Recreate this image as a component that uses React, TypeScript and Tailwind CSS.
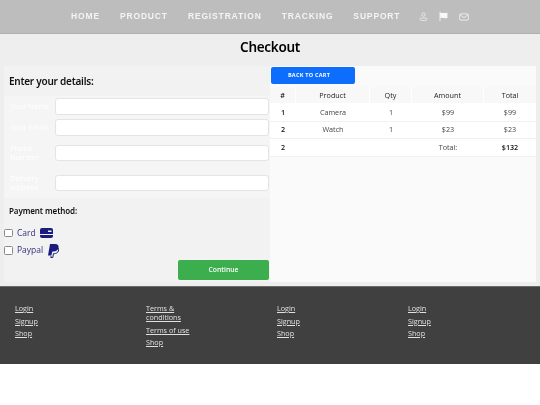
import React from "react";

const sans = "font-['Open_Sans',sans-serif]";

function FieldRow({ label, tall }: { label: string; tall?: boolean }) {
  return (
    <div className={`flex items-center gap-[3px] bg-[#f5f5f5] pl-[2px] pr-[1px] ${tall ? "h-[30px]" : "h-[21px]"}`}>
      <label className="w-[45.5px] pl-[4px] text-[7.5px] leading-[9px] text-white">{label}</label>
      <input className="h-[16.5px] flex-1 rounded-[3px] border border-[#e4e4e4] bg-white min-w-0" />
    </div>
  );
}

function Cell({ children, bold, className = "" }: { children?: React.ReactNode; bold?: boolean; className?: string }) {
  return (
    <div className={`flex items-center justify-center ${bold ? "font-semibold text-[#111]" : "text-[#444]"} ${className}`}>
      {children}
    </div>
  );
}

const cols = "grid grid-cols-[26px_74px_42px_72px_52px] text-[7.2px]";

function FooterCol({ links }: { links: string[] }) {
  return (
    <div className="flex flex-col gap-[3.5px]">
      {links.map((l) => (
        <a key={l} href="#" className="w-[50px] text-[7.2px] leading-[9px] text-[#e0e0e0] underline whitespace-pre-line">
          {l}
        </a>
      ))}
    </div>
  );
}

export default function App() {
  return (
    <div className={`${sans} w-[540px] [will-change:transform]`}>
      <header className="flex h-[34px] items-center border-b border-[#b0b0b0] bg-[#bdbdbd] pl-[71px] font-['Liberation_Sans',sans-serif] text-[8.5px] font-bold tracking-[0.85px] text-[#f4f4f4]">
        <nav className="flex gap-[20px]">
          <span>HOME</span>
          <span>PRODUCT</span>
          <span>REGISTRATION</span>
          <span>TRACKING</span>
          <span>SUPPORT</span>
        </nav>
        <div className="ml-[19px] flex items-center gap-[11px]">
          <svg width="9" height="9" viewBox="0 0 16 16" fill="none" stroke="#f4f4f4" strokeWidth="1.3">
            <circle cx="8" cy="4.5" r="3" />
            <rect x="2" y="10.5" width="12" height="4.5" rx="2" />
          </svg>
          <svg width="9" height="9" viewBox="0 0 16 16" fill="#f8f8f8">
            <path d="M1 0h1.500v16H1z" />
            <path d="M2 1.500c4-1 7 1.500 13 0v9c-6 1.500-9-1-13 0z" />
          </svg>
          <svg width="10" height="10" viewBox="0 0 16 16" fill="none" stroke="#f4f4f4" strokeWidth="1.3">
            <rect x="1" y="3" width="14" height="10" rx="2" />
            <path d="M1.500 4.500 8 9l6.500-4.500" />
          </svg>
        </div>
      </header>

      <main className="h-[252px] bg-[#eeeeee]">
        <h1 className="pt-[4px] text-center font-['Noto_Sans',sans-serif] text-[13.5px] font-semibold leading-[19px] tracking-[-0.3px] text-black">Checkout</h1>
        <div className="mt-[9px] flex pl-[4px] pr-[4px]">
          <section className="flex h-[216px] w-[266px] flex-col bg-[#f2f2f2]">
            <h2 className="pl-[5px] pt-[8px] font-['Noto_Sans',sans-serif] text-[10px] font-semibold leading-[15px] tracking-[-0.25px] text-[#111]">Enter your details:</h2>
            <div className="mt-[7px] flex flex-col">
              <FieldRow label="Your Name" />
              <FieldRow label="Your Email" />
              <FieldRow label="Phone Number" tall />
              <FieldRow label="Delivery address" tall />
            </div>
            <p className="mt-[7px] pl-[5px] font-['Noto_Sans',sans-serif] text-[8px] font-semibold leading-[12px] tracking-[-0.1px] text-[#111]">Payment method:</p>
            <div className="mt-[8px] flex h-[16px] items-center text-[8.5px] text-[#33307f]">
              <span className="h-[8.5px] w-[8.5px] rounded-[1.5px] border border-[#8a8a8a] bg-white" />
              <span className="ml-[4.5px]">Card</span>
              <svg className="ml-[4px]" width="13" height="10" viewBox="0 0 13 10">
                <path d="M2 0h9a2 2 0 0 1 2 2v4H0V2a2 2 0 0 1 2-2z" fill="#1c1b7e" />
                <path d="M0 7h13v1a2 2 0 0 1-2 2H2a2 2 0 0 1-2-2z" fill="#1c1b7e" />
                <rect x="8" y="2.500" width="3.500" height="1.500" fill="#f2f2f2" />
              </svg>
            </div>
            <div className="mt-[1px] flex h-[17px] items-center text-[8.5px] text-[#33307f]">
              <span className="h-[8.5px] w-[8.5px] rounded-[1.5px] border border-[#8a8a8a] bg-white" />
              <span className="ml-[4.5px]">Paypal</span>
              <svg className="ml-[5px]" width="11" height="14" viewBox="0 0 11 14">
                <path d="M2 0h5c3 0 4 1.800 3.500 3.800C10 6.500 8 7.500 5.500 7.500H4.300L3.400 11.500H0z" fill="#1c1b7e" />
                <path d="M9.800 3.600c1 .8 1 2.200.6 3.400-.6 1.800-2.300 2.600-4 2.600H5.500L4.800 13.500H2.800l.3-1.400" fill="none" stroke="#1c1b7e" strokeWidth="1" />
              </svg>
            </div>
            <div className="flex justify-end pr-[1px]">
              <button className="mt-[1px] h-[20px] w-[91px] rounded-[2px] bg-[#3cae4d] text-[6.8px] font-semibold text-white">Continue</button>
            </div>
          </section>

          <section className="h-[216px] w-[266px] bg-[#fafafa]">
            <button className="ml-[1px] mt-[1px] block h-[17px] w-[84px] rounded-[2px] bg-[#0d6efd] pr-[8px] text-[5.500px] font-bold tracking-[0.25px] text-white">
              BACK TO CART
            </button>
            <div className="mt-[3px]">
              <div className={`${cols} h-[17px] border-b border-white bg-[#f8f8f8]`}>
                <Cell bold className="border-r border-white">#</Cell>
                <Cell className="border-r border-white !text-[#222]">Product</Cell>
                <Cell className="border-r border-white !text-[#222]">Qty</Cell>
                <Cell className="border-r border-white !text-[#222]">Amount</Cell>
                <Cell className="!text-[#222]">Total</Cell>
              </div>
              <div className={`${cols} h-[17.500px] border-b border-[#f1f1f1] bg-white`}>
                <Cell bold>1</Cell><Cell>Camera</Cell><Cell>1</Cell><Cell>$99</Cell><Cell>$99</Cell>
              </div>
              <div className={`${cols} h-[17.500px] border-b border-[#f1f1f1] bg-white`}>
                <Cell bold>2</Cell><Cell>Watch</Cell><Cell>1</Cell><Cell>$23</Cell><Cell>$23</Cell>
              </div>
              <div className={`${cols} h-[17.500px] border-b border-[#f1f1f1] bg-white`}>
                <Cell bold>2</Cell><Cell /><Cell /><Cell>Total:</Cell><Cell bold>$132</Cell>
              </div>
            </div>
          </section>
        </div>
      </main>

      <footer className="grid h-[78px] grid-cols-[131px_131px_131px_131px] border-t border-[#6a6a6a] bg-[#404040] pl-[15px] pt-[17px]">
        <FooterCol links={["Login", "Signup", "Shop"]} />
        <FooterCol links={["Terms & conditions", "Terms of use", "Shop"]} />
        <FooterCol links={["Login", "Signup", "Shop"]} />
        <FooterCol links={["Login", "Signup", "Shop"]} />
      </footer>
    </div>
  );
}
